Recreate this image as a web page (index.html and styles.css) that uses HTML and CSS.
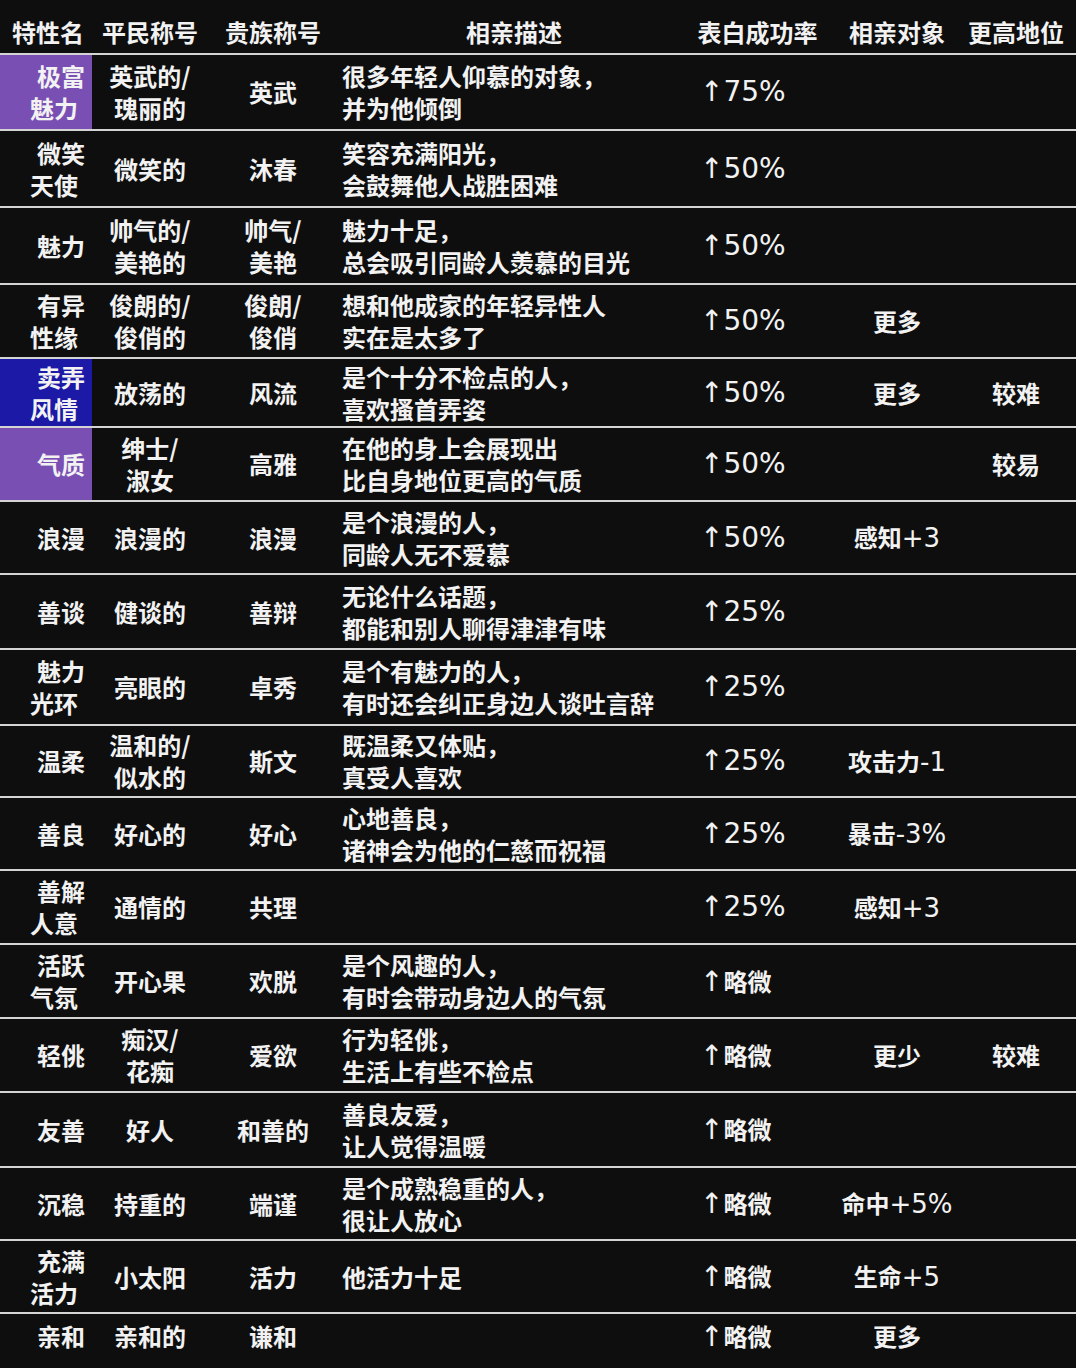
FILE: index.html
```html
<!DOCTYPE html>
<html lang="zh-CN">
<head>
<meta charset="utf-8">
<title>特性表</title>
<link rel="stylesheet" href="styles.css">
</head>
<body>
<div class="table">
  <div class="row head">
    <div class="c c1">特性名</div>
    <div class="c c2">平民称号</div>
    <div class="c c3">贵族称号</div>
    <div class="c c4h">相亲描述</div>
    <div class="c c5h">表白成功率</div>
    <div class="c c6">相亲对象</div>
    <div class="c c7">更高地位</div>
  </div>

  <div class="row">
    <div class="c c1 purple"><span class="l">极富</span><span class="l l2">魅力</span></div>
    <div class="c c2"><span class="l">英武的/</span><span class="l">瑰丽的</span></div>
    <div class="c c3">英武</div>
    <div class="c c4"><span class="l">很多年轻人仰慕的对象，</span><span class="l">并为他倾倒</span></div>
    <div class="c c5"><span class="num">↑75%</span></div>
    <div class="c c6"></div>
    <div class="c c7"></div>
  </div>

  <div class="row">
    <div class="c c1"><span class="l">微笑</span><span class="l l2">天使</span></div>
    <div class="c c2">微笑的</div>
    <div class="c c3">沐春</div>
    <div class="c c4"><span class="l">笑容充满阳光，</span><span class="l">会鼓舞他人战胜困难</span></div>
    <div class="c c5"><span class="num">↑50%</span></div>
    <div class="c c6"></div>
    <div class="c c7"></div>
  </div>

  <div class="row">
    <div class="c c1">魅力</div>
    <div class="c c2"><span class="l">帅气的/</span><span class="l">美艳的</span></div>
    <div class="c c3"><span class="l">帅气/</span><span class="l">美艳</span></div>
    <div class="c c4"><span class="l">魅力十足，</span><span class="l">总会吸引同龄人羡慕的目光</span></div>
    <div class="c c5"><span class="num">↑50%</span></div>
    <div class="c c6"></div>
    <div class="c c7"></div>
  </div>

  <div class="row">
    <div class="c c1"><span class="l">有异</span><span class="l l2">性缘</span></div>
    <div class="c c2"><span class="l">俊朗的/</span><span class="l">俊俏的</span></div>
    <div class="c c3"><span class="l">俊朗/</span><span class="l">俊俏</span></div>
    <div class="c c4"><span class="l">想和他成家的年轻异性人</span><span class="l">实在是太多了</span></div>
    <div class="c c5"><span class="num">↑50%</span></div>
    <div class="c c6">更多</div>
    <div class="c c7"></div>
  </div>

  <div class="row">
    <div class="c c1 blue"><span class="l">卖弄</span><span class="l l2">风情</span></div>
    <div class="c c2">放荡的</div>
    <div class="c c3">风流</div>
    <div class="c c4"><span class="l">是个十分不检点的人，</span><span class="l">喜欢搔首弄姿</span></div>
    <div class="c c5"><span class="num">↑50%</span></div>
    <div class="c c6">更多</div>
    <div class="c c7">较难</div>
  </div>

  <div class="row">
    <div class="c c1 purple">气质</div>
    <div class="c c2"><span class="l">绅士/</span><span class="l">淑女</span></div>
    <div class="c c3">高雅</div>
    <div class="c c4"><span class="l">在他的身上会展现出</span><span class="l">比自身地位更高的气质</span></div>
    <div class="c c5"><span class="num">↑50%</span></div>
    <div class="c c6"></div>
    <div class="c c7">较易</div>
  </div>

  <div class="row">
    <div class="c c1">浪漫</div>
    <div class="c c2">浪漫的</div>
    <div class="c c3">浪漫</div>
    <div class="c c4"><span class="l">是个浪漫的人，</span><span class="l">同龄人无不爱慕</span></div>
    <div class="c c5"><span class="num">↑50%</span></div>
    <div class="c c6"><span>感知<span class="stat">+3</span></span></div>
    <div class="c c7"></div>
  </div>

  <div class="row">
    <div class="c c1">善谈</div>
    <div class="c c2">健谈的</div>
    <div class="c c3">善辩</div>
    <div class="c c4"><span class="l">无论什么话题，</span><span class="l">都能和别人聊得津津有味</span></div>
    <div class="c c5"><span class="num">↑25%</span></div>
    <div class="c c6"></div>
    <div class="c c7"></div>
  </div>

  <div class="row">
    <div class="c c1"><span class="l">魅力</span><span class="l l2">光环</span></div>
    <div class="c c2">亮眼的</div>
    <div class="c c3">卓秀</div>
    <div class="c c4"><span class="l">是个有魅力的人，</span><span class="l">有时还会纠正身边人谈吐言辞</span></div>
    <div class="c c5"><span class="num">↑25%</span></div>
    <div class="c c6"></div>
    <div class="c c7"></div>
  </div>

  <div class="row">
    <div class="c c1">温柔</div>
    <div class="c c2"><span class="l">温和的/</span><span class="l">似水的</span></div>
    <div class="c c3">斯文</div>
    <div class="c c4"><span class="l">既温柔又体贴，</span><span class="l">真受人喜欢</span></div>
    <div class="c c5"><span class="num">↑25%</span></div>
    <div class="c c6"><span>攻击力<span class="stat">-1</span></span></div>
    <div class="c c7"></div>
  </div>

  <div class="row">
    <div class="c c1">善良</div>
    <div class="c c2">好心的</div>
    <div class="c c3">好心</div>
    <div class="c c4"><span class="l">心地善良，</span><span class="l">诸神会为他的仁慈而祝福</span></div>
    <div class="c c5"><span class="num">↑25%</span></div>
    <div class="c c6"><span>暴击<span class="stat">-3%</span></span></div>
    <div class="c c7"></div>
  </div>

  <div class="row">
    <div class="c c1"><span class="l">善解</span><span class="l l2">人意</span></div>
    <div class="c c2">通情的</div>
    <div class="c c3">共理</div>
    <div class="c c4"></div>
    <div class="c c5"><span class="num">↑25%</span></div>
    <div class="c c6"><span>感知<span class="stat">+3</span></span></div>
    <div class="c c7"></div>
  </div>

  <div class="row">
    <div class="c c1"><span class="l">活跃</span><span class="l l2">气氛</span></div>
    <div class="c c2">开心果</div>
    <div class="c c3">欢脱</div>
    <div class="c c4"><span class="l">是个风趣的人，</span><span class="l">有时会带动身边人的气氛</span></div>
    <div class="c c5"><span><span class="num">↑</span>略微</span></div>
    <div class="c c6"></div>
    <div class="c c7"></div>
  </div>

  <div class="row">
    <div class="c c1">轻佻</div>
    <div class="c c2"><span class="l">痴汉/</span><span class="l">花痴</span></div>
    <div class="c c3">爱欲</div>
    <div class="c c4"><span class="l">行为轻佻，</span><span class="l">生活上有些不检点</span></div>
    <div class="c c5"><span><span class="num">↑</span>略微</span></div>
    <div class="c c6">更少</div>
    <div class="c c7">较难</div>
  </div>

  <div class="row">
    <div class="c c1">友善</div>
    <div class="c c2">好人</div>
    <div class="c c3">和善的</div>
    <div class="c c4"><span class="l">善良友爱，</span><span class="l">让人觉得温暖</span></div>
    <div class="c c5"><span><span class="num">↑</span>略微</span></div>
    <div class="c c6"></div>
    <div class="c c7"></div>
  </div>

  <div class="row">
    <div class="c c1">沉稳</div>
    <div class="c c2">持重的</div>
    <div class="c c3">端谨</div>
    <div class="c c4"><span class="l">是个成熟稳重的人，</span><span class="l">很让人放心</span></div>
    <div class="c c5"><span><span class="num">↑</span>略微</span></div>
    <div class="c c6"><span>命中<span class="stat">+5%</span></span></div>
    <div class="c c7"></div>
  </div>

  <div class="row">
    <div class="c c1"><span class="l">充满</span><span class="l l2">活力</span></div>
    <div class="c c2">小太阳</div>
    <div class="c c3">活力</div>
    <div class="c c4">他活力十足</div>
    <div class="c c5"><span><span class="num">↑</span>略微</span></div>
    <div class="c c6"><span>生命<span class="stat">+5</span></span></div>
    <div class="c c7"></div>
  </div>

  <div class="row last">
    <div class="c c1">亲和</div>
    <div class="c c2">亲和的</div>
    <div class="c c3">谦和</div>
    <div class="c c4"></div>
    <div class="c c5"><span><span class="num">↑</span>略微</span></div>
    <div class="c c6">更多</div>
    <div class="c c7"></div>
  </div>
</div>
</body>
</html>
```

FILE: styles.css
```css
html, body {
  margin: 0;
  padding: 0;
  background: #0e0e0e;
}

body {
  color: #f2f2f2;
  font-family: "Noto Sans CJK SC", "Noto Sans", sans-serif;
  font-weight: 700;
  font-size: 24px;
  line-height: 32px;
  width: 1076px;
  min-height: 1368px;
}

.table {
  display: flex;
  flex-direction: column;
}

.row {
  display: grid;
  grid-template-columns: 92px 116px 130px 352px 140px 134px 112px;
  border-bottom: 2px solid #d4d4d4;
  box-sizing: content-box;
}

.row.last {
  border-bottom: none;
}

.head {
  height: 53px;
}
.head .c {
  padding-top: 10px;
  box-sizing: border-box;
}

.row:nth-child(2)  { height: 74px; }
.row:nth-child(3)  { height: 75px; }
.row:nth-child(4)  { height: 75px; }
.row:nth-child(5)  { height: 72px; }
.row:nth-child(6)  { height: 67px; }
.row:nth-child(7)  { height: 72px; }
.row:nth-child(8)  { height: 71px; }
.row:nth-child(9)  { height: 73px; }
.row:nth-child(10) { height: 74px; }
.row:nth-child(11) { height: 70px; }
.row:nth-child(12) { height: 71px; }
.row:nth-child(13) { height: 72px; }
.row:nth-child(14) { height: 72px; }
.row:nth-child(15) { height: 72px; }
.row:nth-child(16) { height: 73px; }
.row:nth-child(17) { height: 71px; }
.row:nth-child(18) { height: 71px; }
.row:nth-child(19) { height: 44px; }

.c {
  display: flex;
  flex-direction: column;
  justify-content: center;
  align-items: center;
  white-space: nowrap;
  overflow: visible;
}

.l {
  display: block;
}

.c1 {
  align-items: flex-end;
  padding-right: 7px;
}
.head .c1 {
  padding-right: 8px;
}
.c1 .l2 {
  padding-right: 7px;
}

.purple {
  background: #7a4fb4;
}
.blue {
  background: #1b19a6;
}

.c4 {
  align-items: flex-start;
  padding-left: 4px;
}
.c4h {
  align-items: center;
}

.c5 {
  align-items: flex-start;
  padding-left: 10px;
}
.c5h {
  align-items: center;
  padding-right: 5px;
}

.c7 {
  padding-right: 8px;
}

.num,
.stat {
  font-family: "DejaVu Sans", sans-serif;
  font-weight: 400;
  font-size: 28px;
}

.stat {
  font-size: 26px;
}
```
